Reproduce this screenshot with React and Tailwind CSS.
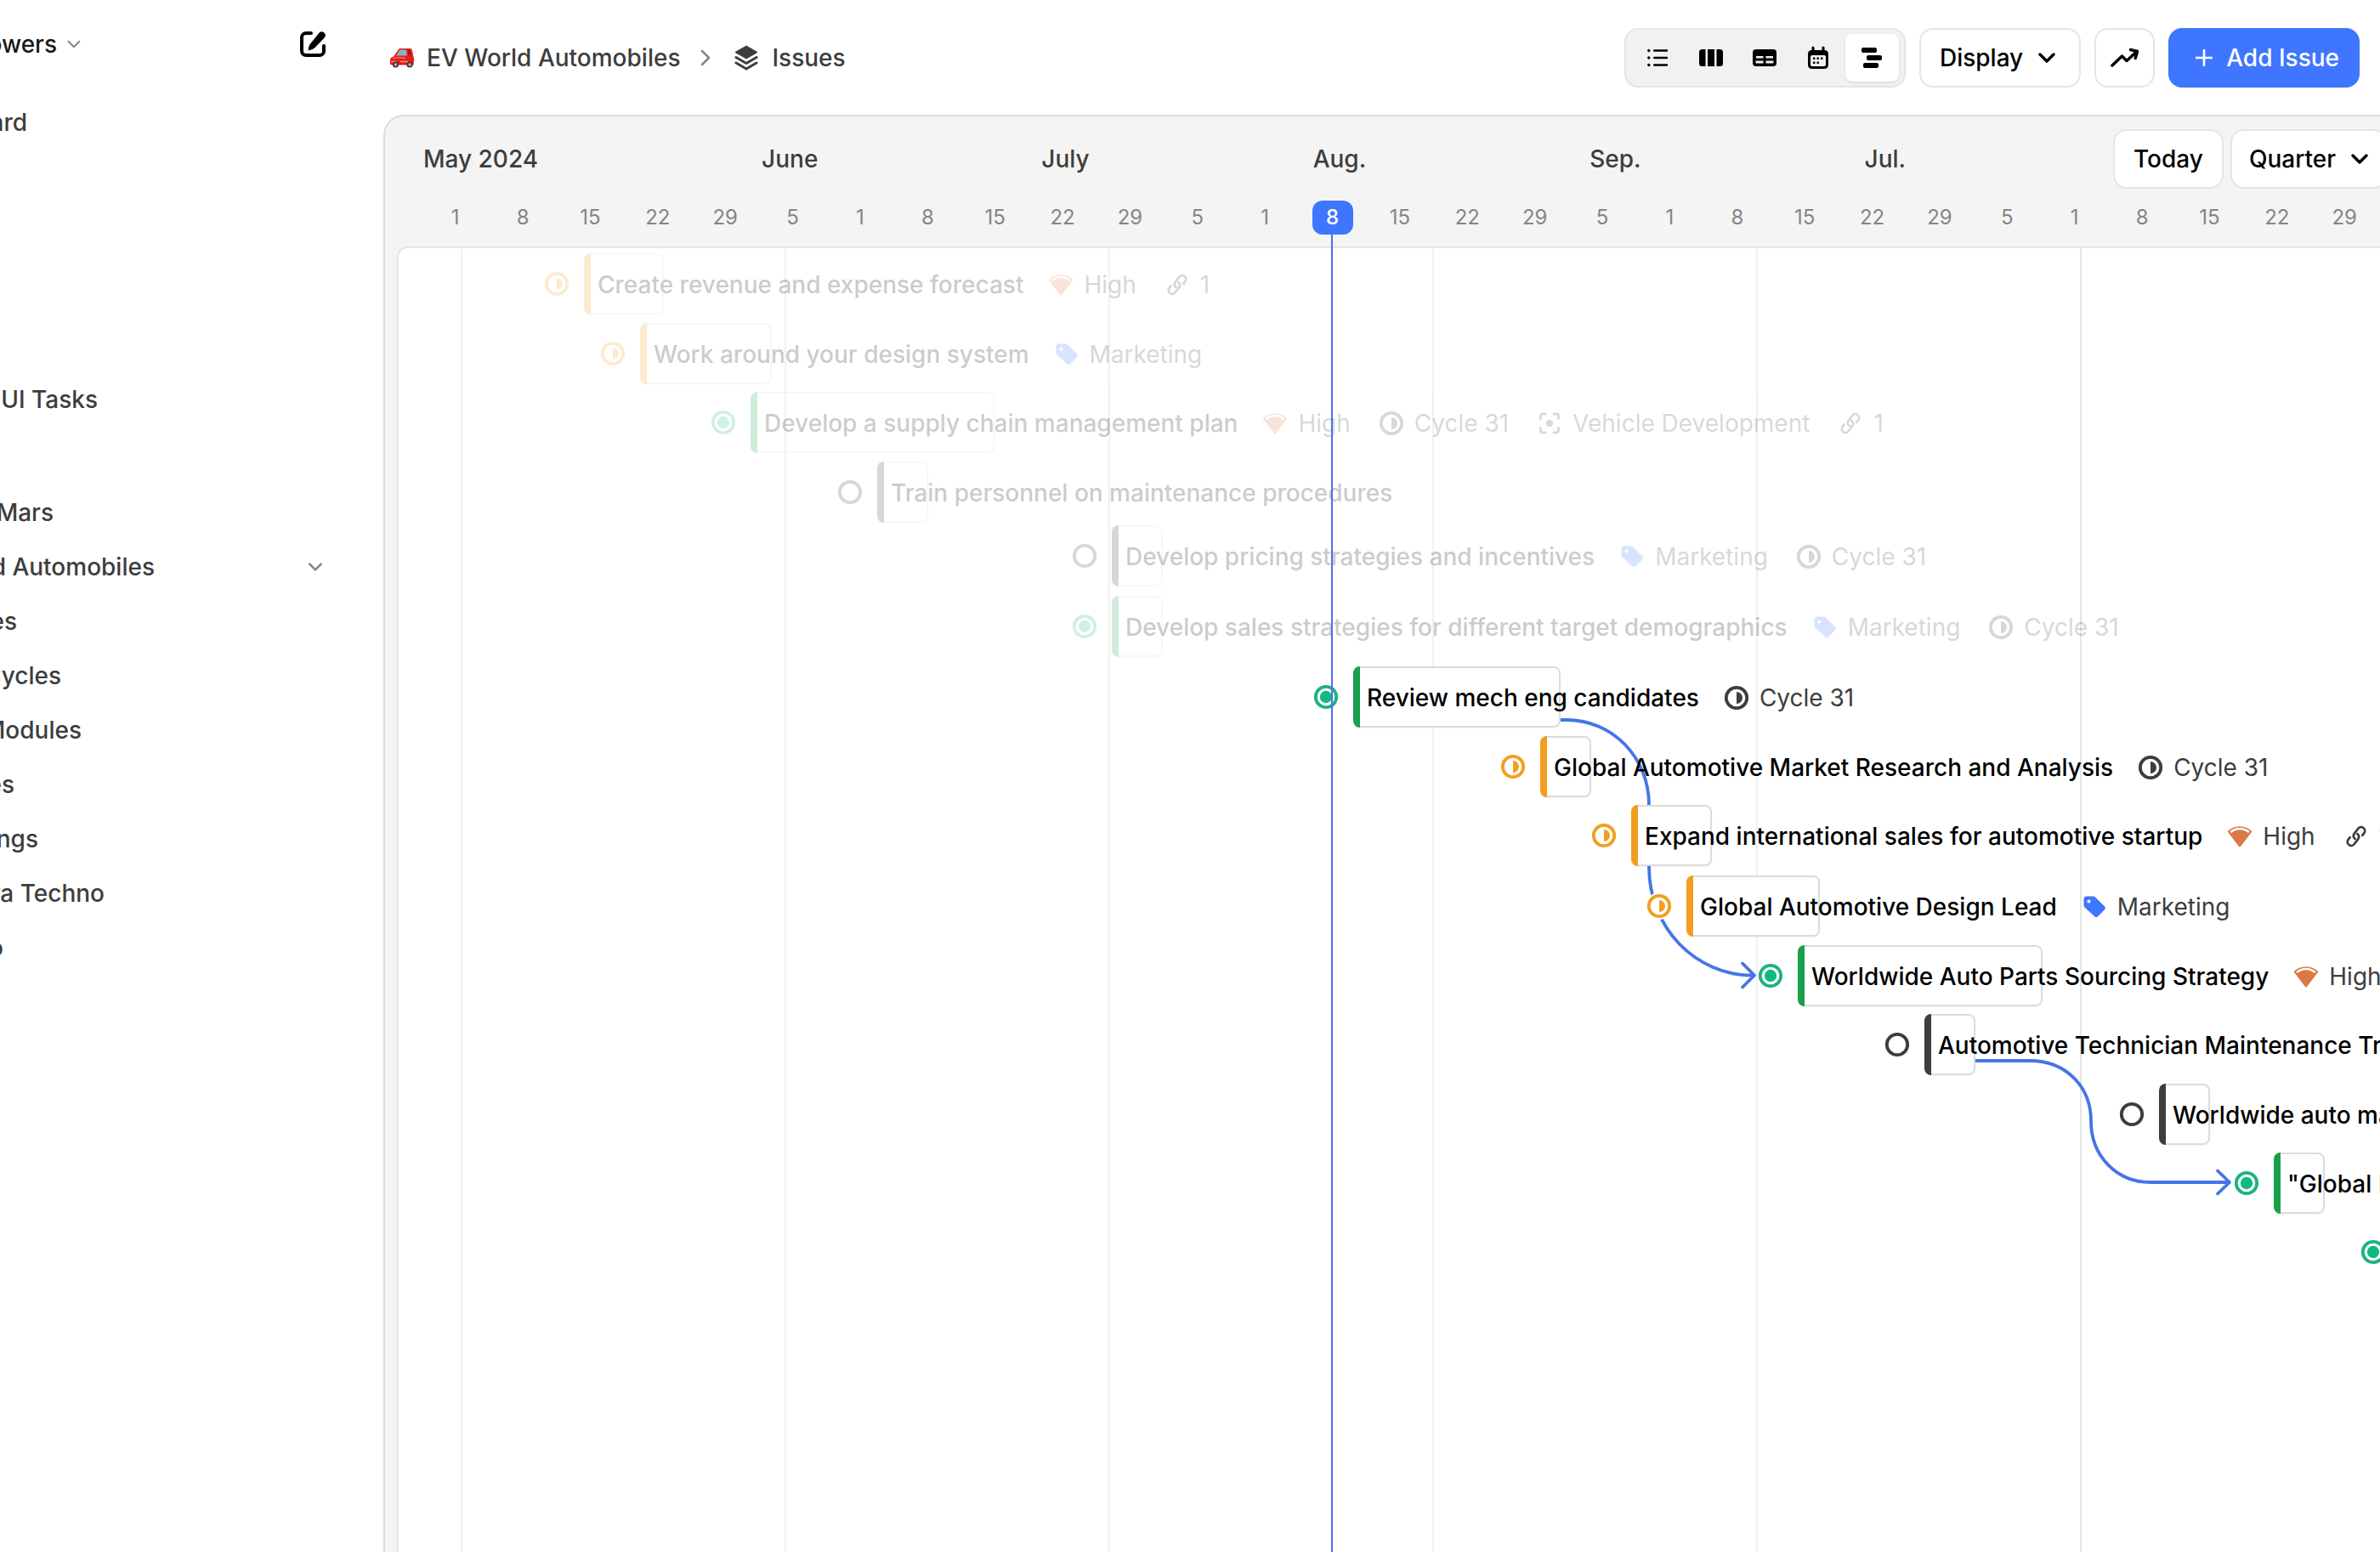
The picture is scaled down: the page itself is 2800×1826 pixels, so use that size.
import React from "react";

const stroke = { fill: "none", stroke: "currentColor", strokeLinecap: "round", strokeLinejoin: "round" };

function ChevronDown({ className, width = 3 }) {
  return (
    <svg viewBox="0 0 20 12" className={className} {...stroke} strokeWidth={width} aria-hidden="true">
      <path d="M2 2l8 8 8-8" />
    </svg>
  );
}

function EditIcon() {
  return (
    <svg viewBox="0 0 32 32" className="size-8" aria-hidden="true">
      <path d="M14 3H8a5 5 0 0 0-5 5v16a5 5 0 0 0 5 5h16a5 5 0 0 0 5-5v-6" {...stroke} strokeWidth="4" />
      <path d="M23.600 2.400a4.300 4.300 0 0 1 6.200 5.900L18.600 20c-1.600 1.600-4 2.600-8 3.200.3-4 1.300-6.600 2.900-8.200z" fill="currentColor" />
    </svg>
  );
}

function CarIcon() {
  return (
    <svg viewBox="0 0 30 24" className="h-6 w-[30px]" aria-hidden="true">
      <path d="M10.500 2.500C11.300 1.300 12 1 13.500 1H24c1.800 0 2.600.8 3 2.500l1.200 6.500c.8 1.600 1 3.400.8 6l-.6 4.500H3.500C1.600 20.500 1 19.800 1 18v-3c0-2.600 1.500-4 4-4.500z" fill="#e3201b" />
      <path d="M11.600 3.500c.5-.8 1-1 2-1H20l.8 7H8z" fill="#7fb6c4" />
      <path d="M21.500 2.500h3l1.600 6.500h-4z" fill="#a5191a" />
      <path d="M4 12.500c4-.8 10-.8 15 0" stroke="#ff6a5c" strokeWidth="1.500" fill="none" />
      <path d="M2.500 16.500h5M13 16.500h9" stroke="#ff8d7c" strokeWidth="1.400" />
      <circle cx="7.500" cy="20" r="3.600" fill="#4a3436" />
      <circle cx="7.500" cy="20" r="1.700" fill="#b9b9bd" />
      <circle cx="24" cy="20" r="3.600" fill="#4a3436" />
      <circle cx="24" cy="20" r="1.700" fill="#b9b9bd" />
    </svg>
  );
}

function LayersIcon() {
  return (
    <svg viewBox="0 0 28 30" className="h-[30px] w-7" aria-hidden="true">
      <path d="M14 1L27 8.500 14 16 1 8.500z" fill="currentColor" stroke="currentColor" strokeLinejoin="round" />
      <path d="M2 14.500l12 7 12-7M2 21l12 7 12-7" {...stroke} strokeWidth="3" />
    </svg>
  );
}

function ListIcon() {
  return (
    <svg viewBox="0 0 24 24" className="size-6" fill="currentColor" aria-hidden="true">
      <circle cx="1.800" cy="3.500" r="1.700" />
      <circle cx="1.800" cy="12" r="1.700" />
      <circle cx="1.800" cy="20.500" r="1.700" />
      <path d="M8.300 3.500H23M8.300 12H23M8.300 20.500H23" {...stroke} strokeWidth="2.600" />
    </svg>
  );
}

function BoardIcon() {
  return (
    <svg viewBox="0 0 30 22" className="h-[22px] w-[30px]" fill="currentColor" aria-hidden="true">
      <path d="M4.500 1H8.500V21H4.500A3.500 3.500 0 0 1 1 17.500V4.500A3.500 3.500 0 0 1 4.500 1z" />
      <path d="M11 1h8v20h-8z" />
      <path d="M21.500 1h4A3.500 3.500 0 0 1 29 4.500v13a3.500 3.500 0 0 1-3.500 3.500h-4z" />
    </svg>
  );
}

function TableIcon() {
  return (
    <svg viewBox="0 0 30 22" className="h-[22px] w-[30px]" aria-hidden="true">
      <rect x="1" y="1" width="28" height="20" rx="4" fill="currentColor" />
      <path d="M5 9h8.500v2.600H5zM16.500 9H25v2.600h-8.500zM4.500 14.500h9v3h-8a1 1 0 0 1-1-1zM16.500 14.500h9v2a1 1 0 0 1-1 1h-8z" fill="#f1f1f1" />
    </svg>
  );
}

function CalendarIcon() {
  return (
    <svg viewBox="0 0 26 28" className="h-7 w-[26px]" aria-hidden="true">
      <path d="M7 2v5M19 2v5" {...stroke} strokeWidth="3" />
      <rect x="1" y="5" width="24" height="22" rx="4.500" fill="currentColor" />
      <rect x="4" y="11" width="18" height="13" rx="2" fill="#f1f1f1" />
      <path d="M7 13.500h2.400v2.400H7zM11.500 13.500h2.400v2.400h-2.400zM16 13.500h2.400v2.400H16zM7 18.500h2.400v2.400H7zM11.500 18.500h2.400v2.400h-2.400z" fill="currentColor" />
    </svg>
  );
}

function GanttIcon() {
  return (
    <svg viewBox="0 0 26 26" className="size-[26px]" fill="currentColor" aria-hidden="true">
      <rect x="1" y="1" width="18" height="6" rx="2" />
      <rect x="7" y="10" width="18" height="6" rx="2" />
      <rect x="3" y="19" width="18" height="6" rx="2" />
    </svg>
  );
}

function TrendIcon() {
  return (
    <svg viewBox="0 0 34 24" className="h-6 w-[34px]" {...stroke} strokeWidth="3.500" aria-hidden="true">
      <path d="M2 21L13.500 10l5.500 5.500L31 4.500" />
      <path d="M23.500 2.500l8 2-2.300 8" />
    </svg>
  );
}

function StateIcon({ state }) {
  const color = { done: "#1fb184", half: "#f0a01f", empty: "#3d3d3d" }[state];
  return (
    <svg viewBox="0 0 32 32" className="size-8 shrink-0" aria-hidden="true">
      <circle cx="16" cy="16" r="16" fill="white" />
      <circle cx="16" cy="16" r="12.200" fill="none" stroke={color} strokeWidth="3.800" />
      {state === "done" && <circle cx="16" cy="16" r="7.200" fill="#10b981" />}
      {state === "half" && <path d="M16 9a7 7 0 0 1 0 14z" fill={color} />}
    </svg>
  );
}

function HighIcon() {
  return (
    <svg viewBox="0 0 32 32" className="size-8 shrink-0" aria-hidden="true">
      <path d="M1.500 10.200C9 2.200 23 2.200 30.500 10.200L17.300 27.400a1.600 1.600 0 0 1-2.600 0z" fill="#dc7844" />
      <path d="M5.200 11.200c6-5.600 15.600-5.600 21.600 0" stroke="white" strokeWidth="2.400" fill="none" />
    </svg>
  );
}

function CycleIcon() {
  return (
    <svg viewBox="0 0 32 32" className="size-8 shrink-0" aria-hidden="true">
      <circle cx="16" cy="16" r="12.200" fill="none" stroke="#3d3d3d" strokeWidth="3.800" />
      <path d="M16 9a7 7 0 0 1 0 14z" fill="#3d3d3d" />
    </svg>
  );
}

function TagIcon() {
  return (
    <svg viewBox="0 0 32 32" className="size-8 shrink-0" aria-hidden="true">
      <path d="M3.500 7a3.500 3.500 0 0 1 3.500-3.500h7.500a3.500 3.500 0 0 1 2.500 1l10.800 10.800a3 3 0 0 1 0 4.200l-7.600 7.600a3 3 0 0 1-4.200 0L4.500 16.500a3.500 3.500 0 0 1-1-2.500z" fill="#3f76ff" />
      <circle cx="9.500" cy="9.500" r="2.100" fill="white" />
    </svg>
  );
}

function ModuleIcon() {
  return (
    <svg viewBox="0 0 32 32" className="size-8 shrink-0 text-[#3d3d3d]" aria-hidden="true">
      <path d="M5.500 10.500V7.500a2.500 2.500 0 0 1 2.500-2.500h3M21 5h3a2.500 2.500 0 0 1 2.500 2.500v3M26.500 21.500v3A2.500 2.500 0 0 1 24 27h-3M11 27H8a2.500 2.500 0 0 1-2.500-2.500v-3" {...stroke} strokeWidth="2.800" />
      <circle cx="16" cy="16" r="4" fill="currentColor" />
    </svg>
  );
}

function LinkIcon() {
  return (
    <svg viewBox="0 0 32 32" className="size-8 shrink-0 text-[#3d3d3d]" {...stroke} strokeWidth="2.700" aria-hidden="true">
      <path d="M14.600 18.900c-2-1.700-2.300-4.200-.7-6.300l4.300-5.600c1.600-2.100 4.300-2.500 6.300-1 2 1.600 2.300 4.300.7 6.400l-1.900 2.500" />
      <path d="M17.400 13.100c2 1.700 2.300 4.200.7 6.300l-4.300 5.600c-1.600 2.100-4.300 2.500-6.300 1-2-1.600-2.300-4.300-.7-6.400l1.900-2.500" />
    </svg>
  );
}

const metaIcons = { high: HighIcon, cycle: CycleIcon, tag: TagIcon, module: ModuleIcon, link: LinkIcon };

const high = ["high", "High"];
const cycle = ["cycle", "Cycle 31"];
const marketing = ["tag", "Marketing"];
const vehicle = ["module", "Vehicle Development"];
const link = ["link", "1"];

const issues = [
  { pos: "left-[170px] top-[6px]", bar: "w-[94px]", state: "half", title: "Create revenue and expense forecast", meta: [high, link], past: true },
  { pos: "left-[236px] top-[88px]", bar: "w-[155px]", state: "half", title: "Work around your design system", meta: [marketing], past: true },
  { pos: "left-[366px] top-[169px]", bar: "w-[287px]", state: "done", title: "Develop a supply chain management plan", meta: [high, cycle, vehicle, link], past: true },
  { pos: "left-[515px] top-[251px]", bar: "w-[60px]", state: "empty", title: "Train personnel on maintenance procedures", meta: [], past: true },
  { pos: "left-[791px] top-[326px]", bar: "w-[60px]", state: "empty", title: "Develop pricing strategies and incentives", meta: [marketing, cycle], past: true },
  { pos: "left-[791px] top-[409px]", bar: "w-[60px]", state: "done", title: "Develop sales strategies for different target demographics", meta: [marketing, cycle], past: true },
  { pos: "left-[1075px] top-[492px]", bar: "w-[244px]", state: "done", title: "Review mech eng candidates", meta: [cycle] },
  { pos: "left-[1295px] top-[574px]", bar: "w-[60px]", state: "half", title: "Global Automotive Market Research and Analysis", meta: [cycle] },
  { pos: "left-[1402px] top-[655px]", bar: "w-[95px]", state: "half", title: "Expand international sales for automotive startup", meta: [high, link] },
  { pos: "left-[1467px] top-[738px]", bar: "w-[157px]", state: "half", title: "Global Automotive Design Lead", meta: [marketing] },
  { pos: "left-[1598px] top-[820px]", bar: "w-[288px]", state: "done", title: "Worldwide Auto Parts Sourcing Strategy", meta: [high] },
  { pos: "left-[1747px] top-[901px]", bar: "w-[60px]", state: "empty", title: "Automotive Technician Maintenance Training", meta: [] },
  { pos: "left-[2023px] top-[983px]", bar: "w-[60px]", state: "empty", title: "Worldwide auto market", meta: [] },
  { pos: "left-[2158px] top-[1064px]", bar: "w-[60px]", state: "done", title: "\"Global Market", meta: [] },
  { pos: "left-[2307px] top-[1145px]", bar: "w-[60px]", state: "done", title: "", meta: [] },
];

const accents = { half: "bg-[#f29d20]", done: "bg-[#18a04a]", empty: "bg-[#3d3d3d]" };

function IssueRow({ issue }) {
  return (
    <li className={`absolute flex h-[72px] items-center whitespace-nowrap ${issue.pos} ${issue.past ? "opacity-20" : ""}`}>
      <StateIcon state={issue.state} />
      <div className={`ml-4 flex h-full shrink-0 items-center rounded-lg border-2 border-l-0 border-[#dcdcdc] bg-white shadow-xs ${issue.bar}`}>
        <span className={`-my-0.5 h-[72px] w-2 shrink-0 rounded-l-lg ${accents[issue.state]}`} />
        <div className="flex items-center gap-7 pt-0.5 pl-2">
          <span className="font-medium text-black">{issue.title}</span>
          <div className="flex items-center gap-8">
            {issue.meta.map(([kind, label]) => {
              const Icon = metaIcons[kind];
              return (
                <span key={kind} className="flex items-center gap-[11px] text-[#3d3d3d]">
                  <Icon />
                  {label}
                </span>
              );
            })}
          </div>
        </div>
      </div>
    </li>
  );
}

function Connectors() {
  return (
    <svg viewBox="0 0 2331 1534" className="absolute top-0 left-0 h-[1534px] w-[2331px] text-[#4575e6]" {...stroke} strokeWidth="3.800" aria-hidden="true">
      <path d="M1367 555h7c54 0 97 44 97 100v73c0 72 55 127.500 122 127.500" />
      <path d="M1581 841.500l14 14-14 14" />
      <path d="M1855 956h64c42 0 72 30 72 71 0 41 30 72 70 72h92" />
      <path d="M2140 1085.500l14 13.500-14 13.500" />
    </svg>
  );
}

const months = ["May 2024", "June", "July", "Aug.", "Sep.", "Jul."];
const week = [1, 8, 15, 22, 29, 5];
const days = Array.from({ length: 29 }, (_, i) => week[i % 6]);
const today = 13;

const views = [
  ["List", ListIcon],
  ["Board", BoardIcon],
  ["Table", TableIcon],
  ["Calendar", CalendarIcon],
  ["Timeline", GanttIcon],
];

const outline = "flex h-[70px] shrink-0 items-center rounded-2xl border-2 border-[#e5e5e5] bg-white font-medium text-black";

function NavItem({ width, children }) {
  return (
    <a href="#" className={`flex h-16 items-center justify-end overflow-hidden whitespace-nowrap ${width}`}>
      {children}
    </a>
  );
}

function Sidebar() {
  return (
    <aside className="w-[451px] shrink-0 overflow-hidden font-medium text-[#3d3d3d]">
      <div className="flex h-[104px] items-center justify-between pr-[67px]">
        <button className="flex items-center gap-3 text-[#171717]">
          <span className="flex w-[67px] justify-end">owers</span>
          <ChevronDown className="h-2.5 w-4 text-[#858585]" width={2.5} />
        </button>
        <button aria-label="New issue" className="text-black">
          <EditIcon />
        </button>
      </div>
      <nav className="flex flex-col pt-2">
        <NavItem width="w-[32px]">ard</NavItem>
        <div className="h-[262px]" />
        <NavItem width="w-[115px]">UI Tasks</NavItem>
        <div className="h-[69px]" />
        <NavItem width="w-[63px]">Mars</NavItem>
        <div className="flex items-center justify-between pr-[71px]">
          <NavItem width="w-[182px]">d Automobiles</NavItem>
          <button aria-label="Collapse project">
            <ChevronDown className="h-2.5 w-[18px] text-[#858585]" />
          </button>
        </div>
        <NavItem width="w-[20px]">es</NavItem>
        <NavItem width="w-[72px]">Cycles</NavItem>
        <NavItem width="w-[96px]">Modules</NavItem>
        <NavItem width="w-[17px]">es</NavItem>
        <NavItem width="w-[45px]">ngs</NavItem>
        <NavItem width="w-[123px]">ra Techno</NavItem>
        <NavItem width="w-[4px]">o</NavItem>
      </nav>
    </aside>
  );
}

function Header() {
  return (
    <header className="flex h-[135px] shrink-0 items-center justify-between pr-6 pl-[7px]">
      <nav aria-label="Breadcrumb" className="flex items-center font-medium text-[#3d3d3d]">
        <a href="#" className="flex items-center gap-3.5">
          <CarIcon />
          <span>EV World Automobiles</span>
        </a>
        <svg viewBox="0 0 12 20" className="mr-7 ml-6 h-5 w-3 text-[#858585]" {...stroke} strokeWidth="2.500" aria-hidden="true">
          <path d="M2 2l8 8-8 8" />
        </svg>
        <a href="#" className="flex items-center gap-4">
          <LayersIcon />
          <span>Issues</span>
        </a>
      </nav>
      <div className="flex items-center gap-4">
        <div className="flex h-[70px] items-center rounded-2xl border-2 border-[#e5e5e5] bg-[#f1f1f1] px-1.5">
          {views.map(([name, Icon]) => (
            <button
              key={name}
              aria-label={name}
              className={`flex h-14 w-[63px] items-center justify-center rounded-lg text-black ${name === "Timeline" ? "bg-white shadow-sm" : ""}`}
            >
              <Icon />
            </button>
          ))}
        </div>
        <button className={`${outline} gap-[18px] pr-7 pl-[22px]`}>
          Display
          <ChevronDown className="h-3 w-5" width={3.4} />
        </button>
        <button aria-label="Analytics" className={`${outline} w-[71px] justify-center`}>
          <TrendIcon />
        </button>
        <button className="flex h-[70px] items-center gap-4 rounded-2xl bg-[#3f76ff] pr-6 pl-8 font-medium text-white">
          <svg viewBox="0 0 20 20" className="size-5" {...stroke} strokeWidth="2.600" aria-hidden="true">
            <path d="M10 1v18M1 10h18" />
          </svg>
          Add Issue
        </button>
      </div>
    </header>
  );
}

function Timeline() {
  return (
    <section className="flex min-h-0 flex-1 flex-col overflow-hidden rounded-tl-3xl border-t-2 border-l-2 border-[#dcdcdc] bg-[#f4f4f4]">
      <div className="flex h-[99px] shrink-0 items-center justify-between pl-[45px]">
        <div className="flex gap-[263px] font-medium text-[#3d3d3d]">
          {months.map((month) => (
            <span key={month} className="whitespace-nowrap">{month}</span>
          ))}
        </div>
        <div className="-mr-2 flex gap-2">
          <button className={`${outline} px-[22px]`}>Today</button>
          <button className={`${outline} gap-[18px] px-5`}>
            Quarter
            <ChevronDown className="h-3 w-5" width={3.4} />
          </button>
        </div>
      </div>
      <ol className="z-10 flex h-[54px] shrink-0 pr-0.5 pl-[43px] text-2xl text-[#858585]">
        {days.map((day, i) => (
          <li key={i} className="flex h-10 flex-1 basis-0 items-center justify-center">
            {i === today ? (
              <span className="relative flex h-10 w-12 items-center justify-center rounded-xl bg-[#3f76ff] font-medium text-white">
                {day}
                <span className="absolute top-full left-[22px] h-[1600px] w-0.5 bg-[#4575e6]" />
              </span>
            ) : (
              day
            )}
          </li>
        ))}
      </ol>
      <div className="relative ml-3.5 flex-1 overflow-hidden rounded-tl-xl border-t-2 border-l-2 border-[#e5e5e5] bg-white">
        <div className="flex h-full pl-[73px]">
          <div className="w-[381px] shrink-0 border-l-2 border-[#f1f1f1]" />
          <div className="w-[381px] shrink-0 border-l-2 border-[#f1f1f1]" />
          <div className="w-[381px] shrink-0 border-l-2 border-[#f1f1f1]" />
          <div className="w-[381px] shrink-0 border-l-2 border-[#f1f1f1]" />
          <div className="w-[381px] shrink-0 border-l-2 border-[#f1f1f1]" />
          <div className="w-[381px] shrink-0 border-l-2 border-[#e5e5e5]" />
        </div>
        <Connectors />
        <ul>
          {issues.map((issue, i) => (
            <IssueRow key={i} issue={issue} />
          ))}
        </ul>
      </div>
    </section>
  );
}

export default function App() {
  return (
    <div className="flex h-screen overflow-hidden bg-white font-[Inter,sans-serif] text-[28px] leading-9">
      <Sidebar />
      <main className="flex min-w-0 flex-1 flex-col">
        <Header />
        <Timeline />
      </main>
    </div>
  );
}
